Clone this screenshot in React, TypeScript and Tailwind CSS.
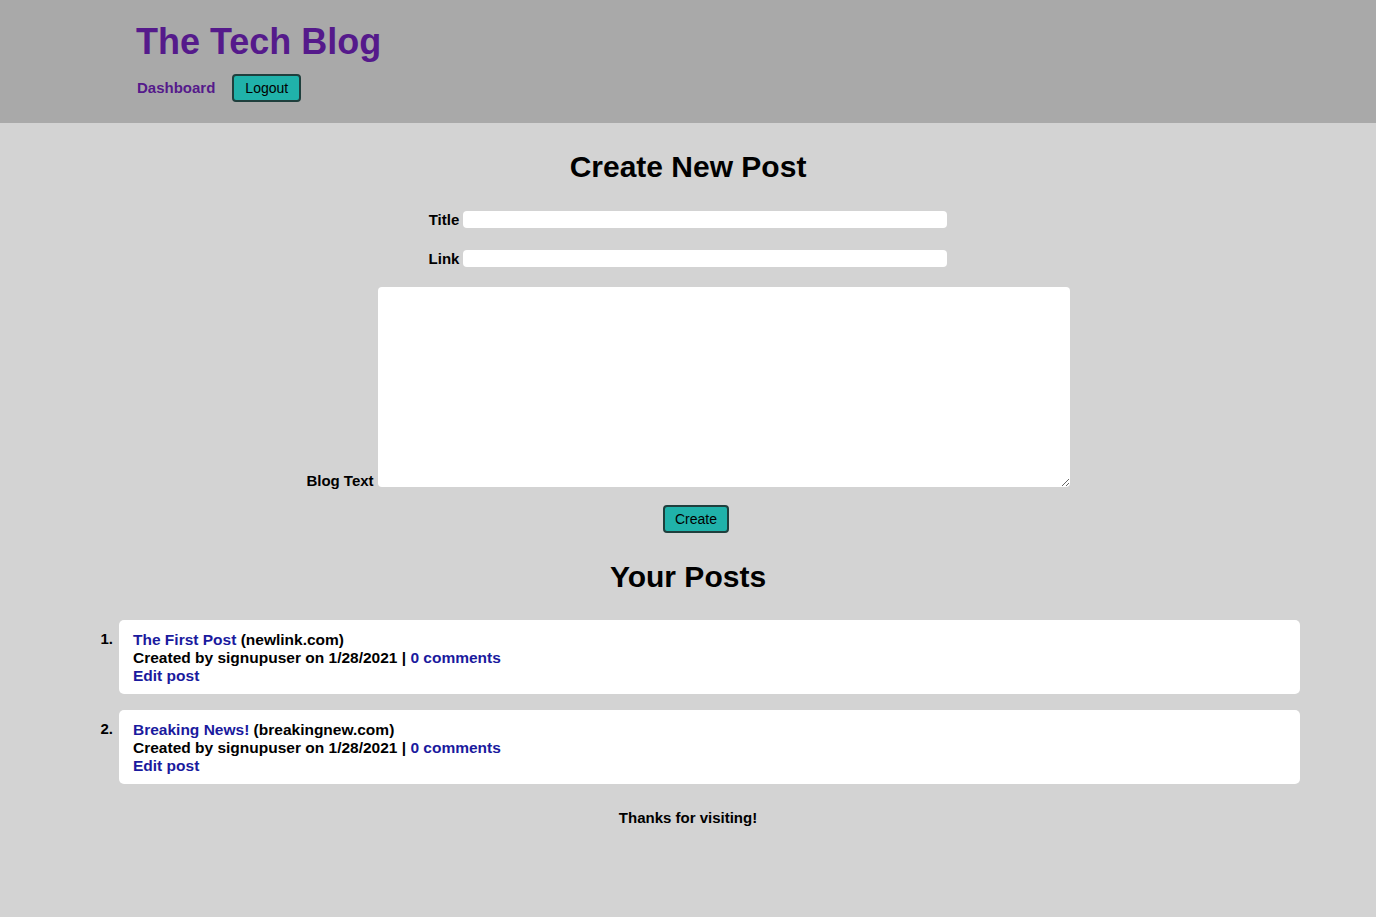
const posts = [
  { title: 'The First Post', link: 'newlink.com' },
  { title: 'Breaking News!', link: 'breakingnew.com' },
];

function PostItem({ index, title, link }: { index: number; title: string; link: string }) {
  return (
    <li className="flex items-start">
      <span className="w-[30px] pt-[8px] pr-[2px] text-right">{index}.</span>
      <div className="ml-[4px] flex-1 rounded-[5px] bg-white px-[14px] pb-[9px] pt-[11px] text-[15.5px] leading-[18px]">
        <div>
          <a href="#" className="text-[#1a1a9e]">{title}</a> ({link})
        </div>
        <div>
          Created by signupuser on 1/28/2021 | <a href="#" className="text-[#1a1a9e]">0 comments</a>
        </div>
        <div>
          <a href="#" className="text-[#1a1a9e]">Edit post</a>
        </div>
      </div>
    </li>
  );
}

export default function App() {
  return (
    <div className="min-h-[917px] bg-[#d3d3d3] font-['Liberation_Sans',sans-serif] text-[15px] font-bold text-black">
      <header className="h-[123px] bg-[#a9a9a9] pl-[136px] pt-[20px]">
        <h1 className="text-[36px] leading-[44px] text-[#551a8b]">The Tech Blog</h1>
        <nav className="mt-[10px] flex items-center gap-[17px]">
          <a href="#" className="ml-[1px] text-[15px] text-[#551a8b]">Dashboard</a>
          <button className="h-[28px] rounded-[4px] border-2 border-[#1f3f3d] bg-[#20b2aa] px-[11px] text-[14px] font-normal">
            Logout
          </button>
        </nav>
      </header>

      <main className="flex flex-col items-center pt-[26px]">
        <h2 className="text-[30px] leading-[36px]">Create New Post</h2>

        <form className="mt-[26px] flex flex-col items-center leading-[17px]">
          <div className="flex items-center gap-[4px]">
            <label>Title</label>
            <input className="h-[17px] w-[484px] rounded-[4px] bg-white" />
          </div>
          <div className="mt-[22px] flex items-center gap-[4px]">
            <label>Link</label>
            <input className="h-[17px] w-[484px] rounded-[4px] bg-white" />
          </div>
          <div className="mt-[20px] flex items-end gap-[4px]">
            <label className="leading-[12px]">Blog Text</label>
            <textarea className="block h-[200px] w-[692px] rounded-[4px] bg-white" />
          </div>
          <button className="ml-[16px] mt-[18px] h-[28px] rounded-[4px] border-2 border-[#1f3f3d] bg-[#20b2aa] px-[10px] text-[14px] font-normal">
            Create
          </button>
        </form>

        <h2 className="mt-[26px] text-[30px] leading-[36px]">Your Posts</h2>

        <ol className="mt-[25px] flex w-full flex-col gap-[16px] pl-[85px] pr-[76px]">
          {posts.map((p, i) => (
            <PostItem key={i} index={i + 1} title={p.title} link={p.link} />
          ))}
        </ol>

        <footer className="mt-[23px]">Thanks for visiting!</footer>
      </main>
    </div>
  );
}
